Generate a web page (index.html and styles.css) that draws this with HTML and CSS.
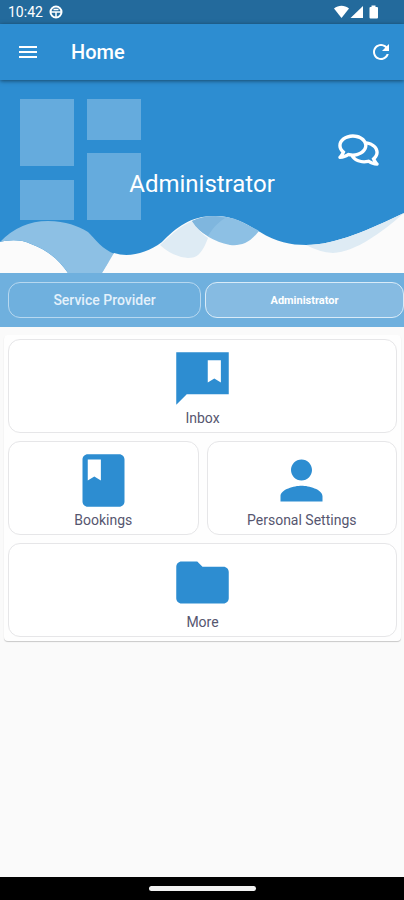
FILE: index.html
```html
<!DOCTYPE html>
<html lang="en">

<head>
    <meta charset="utf-8">
    <meta name="viewport" content="width=device-width, initial-scale=1.0">
    <title>Home</title>
    <link rel="stylesheet" href="styles.css">
</head>

<body>

<!-- status bar -->
<div class="status">
    <span class="time">10:42</span>
    <svg class="status-app" viewBox="0 0 14 14" width="14" height="14" aria-hidden="true">
        <circle cx="7" cy="7" r="5.5" fill="none" stroke="#fff" stroke-width="2"/>
        <path d="M2 7h10M7 7v5M4.500 4.500h5" fill="none" stroke="#fff" stroke-width="1.5"/>
    </svg>
    <svg class="status-icons" viewBox="0 0 44 14" width="44" height="14" aria-hidden="true">
        <path d="M0 3.500C4.500-.2 10.500-.2 15 3.500L7.500 13z" fill="#fff"/>
        <path d="M29 1v12H16.500z" fill="#fff"/>
        <path d="M37.500.5h4V2H43q1 0 1 1v9.500q0 1-1 1h-6.500q-1 0-1-1V3q0-1 1-1h1z" fill="#fff"/>
    </svg>
</div>

<header class="appbar">
    <button class="icon-btn" type="button" aria-label="Menu">
        <svg viewBox="0 0 24 24" width="24" height="24" fill="#fff"><path d="M3 18h18v-2H3v2zm0-5h18v-2H3v2zm0-7v2h18V6H3z"/></svg>
    </button>
    <h1>Home</h1>
    <button class="icon-btn" type="button" aria-label="Refresh">
        <svg viewBox="0 0 24 24" width="24" height="24" fill="#fff"><path d="M17.65 6.35C16.2 4.9 14.21 4 12 4c-4.42 0-7.99 3.58-7.99 8s3.57 8 7.990 8c3.730 0 6.840-2.550 7.730-6h-2.080c-.82 2.330-3.040 4-5.650 4-3.310 0-6-2.690-6-6s2.690-6 6-6c1.660 0 3.140.69 4.220 1.780L13 11h7V4l-2.350 2.350z"/></svg>
    </button>
</header>

<main>
    <section class="hero">
        <svg class="waves" viewBox="0 0 404 64" preserveAspectRatio="none" aria-hidden="true">
            <path fill="#fbfbfb" d="M0 33C8 31 21 30 31 35C48 41 60 52 68 64H0z"/>
            <path fill="#8dc0e4" d="M0 33Q20 12 48 12C66 12 78 17 88 23C95 30 103 41 115 45Q108 53 102 64H68C60 52 48 41 31 35C21 30 8 31 0 33z"/>
            <path fill="#fbfbfb" d="M102 64Q108 54 114 44C129 49 147 44 162 33C177 18 190 7 215 7C236 7 247 16 260 23C276 33 291 36 306 36C336 36 370 20 404 4V64z"/>
            <path fill="#deebf4" d="M160 36C174 23 181 17 192 12Q200 24 208 29C202 45 197 49 188 49Q173 48 160 36z"/>
            <path fill="#8dc0e4" d="M192 12C208 5 225 6 240 12Q250 17 259 22C249 35 240 37 230 36Q205 31 192 12z"/>
            <path fill="#7fb6de" d="M192 12C203 7 214 6 225 9Q215 15 208 27Q198 22 192 12z"/>
            <path fill="#deebf4" d="M306 36C336 36 370 20 404 4C382 23 356 43 333 44Q319 43 306 36z"/>
        </svg>
        <svg class="blocks" viewBox="0 0 121 121" width="121" height="121" fill="#65abdd" aria-hidden="true">
            <rect width="54" height="67"/>
            <rect y="81" width="54" height="40"/>
            <rect x="67" width="54" height="41"/>
            <rect x="67" y="54" width="54" height="67"/>
        </svg>
        <h2>Administrator</h2>
        <a class="chat" href="#" aria-label="Messages">
            <svg viewBox="0 0 576 512" width="41" height="36" fill="#fff"><path d="M532 386.2c27.5-27.1 44-61.1 44-98.2 0-80-76.5-146.1-176.2-157.9C368.3 72.5 294.3 32 208 32 93.1 32 0 103.6 0 192c0 37 16.5 71 44 98.2-15.3 30.7-37.3 54.5-37.7 54.9-6.3 6.7-8.1 16.5-4.4 25 3.6 8.5 12 14 21.2 14 53.5 0 96.7-20.2 125.2-38.8 9.2 2.1 18.7 3.7 28.4 4.9C208.1 407.6 281.8 448 368 448c20.8 0 40.8-2.4 59.8-6.8C456.3 459.7 499.4 480 553 480c9.2 0 17.5-5.5 21.2-14 3.6-8.5 1.9-18.3-4.4-25-.4-.3-22.5-24.1-37.8-54.8zm-392.8-92.3L122.1 305c-14.1 9.1-28.5 16.3-43.1 21.4 2.7-4.7 5.4-9.7 8-14.8l15.5-31.1L77.7 256C64.2 242.6 48 220.7 48 192c0-60.7 73.3-112 160-112s160 51.3 160 112-73.3 112-160 112c-16.5 0-33-1.9-49-5.6l-19.8-4.5zM498.3 352l-24.7 24.4 15.5 31.1c2.6 5.1 5.3 10.1 8 14.8-14.6-5.1-29-12.3-43.1-21.4l-17.1-11.1-19.9 4.6c-16 3.7-32.5 5.6-49 5.6-54 0-102.2-20.1-131.3-49.7C338 339.5 416 272.9 416 192c0-3.4-.4-6.7-.7-10C479.7 196.5 528 238.8 528 288c0 28.7-16.2 50.6-29.7 64z"/></svg>
        </a>
    </section>

    <div class="roles">
        <button class="role" type="button">Service Provider</button>
        <button class="role active" type="button">Administrator</button>
    </div>

    <nav class="panel">
        <a class="tile wide" href="#">
            <svg viewBox="0 0 24 24" width="63" height="63"><path d="M2 2v20l4-4h16V2zm17 11.500l-2.500-1.500-2.500 1.500V5h5z"/></svg>
            <span>Inbox</span>
        </a>
        <a class="tile" href="#">
            <svg viewBox="0 0 24 24" width="63" height="63"><path d="M18 2H6c-1.100 0-2 .9-2 2v16c0 1.100.9 2 2 2h12c1.100 0 2-.9 2-2V4c0-1.100-.9-2-2-2zM6 4h5v8l-2.500-1.500L6 12V4z"/></svg>
            <span>Bookings</span>
        </a>
        <a class="tile" href="#">
            <svg viewBox="0 0 24 24" width="63" height="63"><path d="M12 12c2.210 0 4-1.790 4-4s-1.790-4-4-4-4 1.790-4 4 1.790 4 4 4zm0 2c-2.670 0-8 1.340-8 4v2h16v-2c0-2.660-5.330-4-8-4z"/></svg>
            <span>Personal Settings</span>
        </a>
        <a class="tile wide" href="#">
            <svg viewBox="0 0 24 24" width="63" height="63"><path d="M10 4H4c-1.100 0-1.990.9-1.990 2L2 18c0 1.100.9 2 2 2h16c1.100 0 2-.9 2-2V8c0-1.100-.9-2-2-2h-8l-2-2z"/></svg>
            <span>More</span>
        </a>
    </nav>
</main>

<!-- gesture bar -->
<footer class="gesture">
    <div class="handle"></div>
</footer>

</body>

</html>
```
FILE: styles.css
```css
*
{
    box-sizing: border-box;
    margin: 0;
}

body
{
    display: flex;
    flex-direction: column;
    min-height: 100vh;
    background-color: #fafafa;
    font-family: Roboto, "Liberation Sans", sans-serif;
}

a
{
    text-decoration: none;
}

svg
{
    display: block;
}

button
{
    border: none;
    background: none;
    padding: 0;
    font-family: inherit;
    cursor: pointer;
}

main
{
    flex: 1;
}

/* status bar */
.status
{
    display: flex;
    align-items: center;
    gap: 6px;
    height: 24px;
    padding: 0 26px 0 8px;
    background-color: #236a9c;
    color: #fff;
}

.time
{
    font-size: 14px;
    line-height: 24px;
}

.status-icons
{
    margin-left: auto;
}

/* app bar */
.appbar
{
    display: flex;
    align-items: center;
    height: 56px;
    padding: 0 11px 0 16px;
    background-color: #2d8dd1;
    box-shadow: 0 1px 4px rgba(0, 0, 0, 0.5);
    position: relative;
    z-index: 1;
}

.appbar h1
{
    flex: 1;
    margin-left: 31px;
    font-size: 20px;
    line-height: 24px;
    font-weight: 500;
    color: #fff;
}

/* hero, everything shares one grid cell */
.hero
{
    display: grid;
    height: 193px;
    background-color: #2d8dd1;
}

.hero > *
{
    grid-area: 1 / 1;
}

.waves
{
    width: 100%;
    height: 64px;
    align-self: end;
}

.blocks
{
    margin: 19px 0 0 20px;
}

.hero h2
{
    place-self: center;
    padding-top: 14px;
    font-size: 24px;
    line-height: 28px;
    font-weight: 400;
    color: #fff;
}

.chat
{
    justify-self: end;
    align-self: start;
    margin: 52px 25px 0 0;
}

/* role switch */
.roles
{
    display: grid;
    grid-template-columns: 193fr 199fr;
    gap: 4px;
    padding: 9px 0 9px 8px;
    background-color: #6fb0de;
}

.role
{
    height: 36px;
    border: 1px solid #b7d8f0;
    border-radius: 12px;
    color: #e4f1fb;
    font-size: 14px;
    font-weight: 500;
}

.role.active
{
    background-color: #86bbe2;
    border-color: #d9ebf8;
    color: #fff;
    font-size: 11px;
    font-weight: 700;
}

/* tiles */
.panel
{
    display: grid;
    grid-template-columns: 1fr 1fr;
    gap: 8px;
    margin: 8px 3px 0 4px;
    padding: 4px;
    background-color: #fefefe;
    border-radius: 4px;
    box-shadow: 0 1px 1px rgba(0, 0, 0, 0.2);
}

.tile
{
    display: flex;
    flex-direction: column;
    align-items: center;
    padding: 7px 0 6px;
    border: 1px solid #e6e6e8;
    border-radius: 12px;
    background-color: #fff;
}

.tile.wide
{
    grid-column: 1 / 3;
}

.tile svg
{
    fill: #2d8dd1;
}

.tile span
{
    font-size: 14px;
    line-height: 16px;
    color: #56566f;
}

/* gesture bar */
.gesture
{
    display: flex;
    justify-content: center;
    align-items: center;
    height: 23px;
    background-color: #000;
}

.handle
{
    width: 107px;
    height: 5px;
    border-radius: 3px;
    background-color: #f2f2f2;
}
```
